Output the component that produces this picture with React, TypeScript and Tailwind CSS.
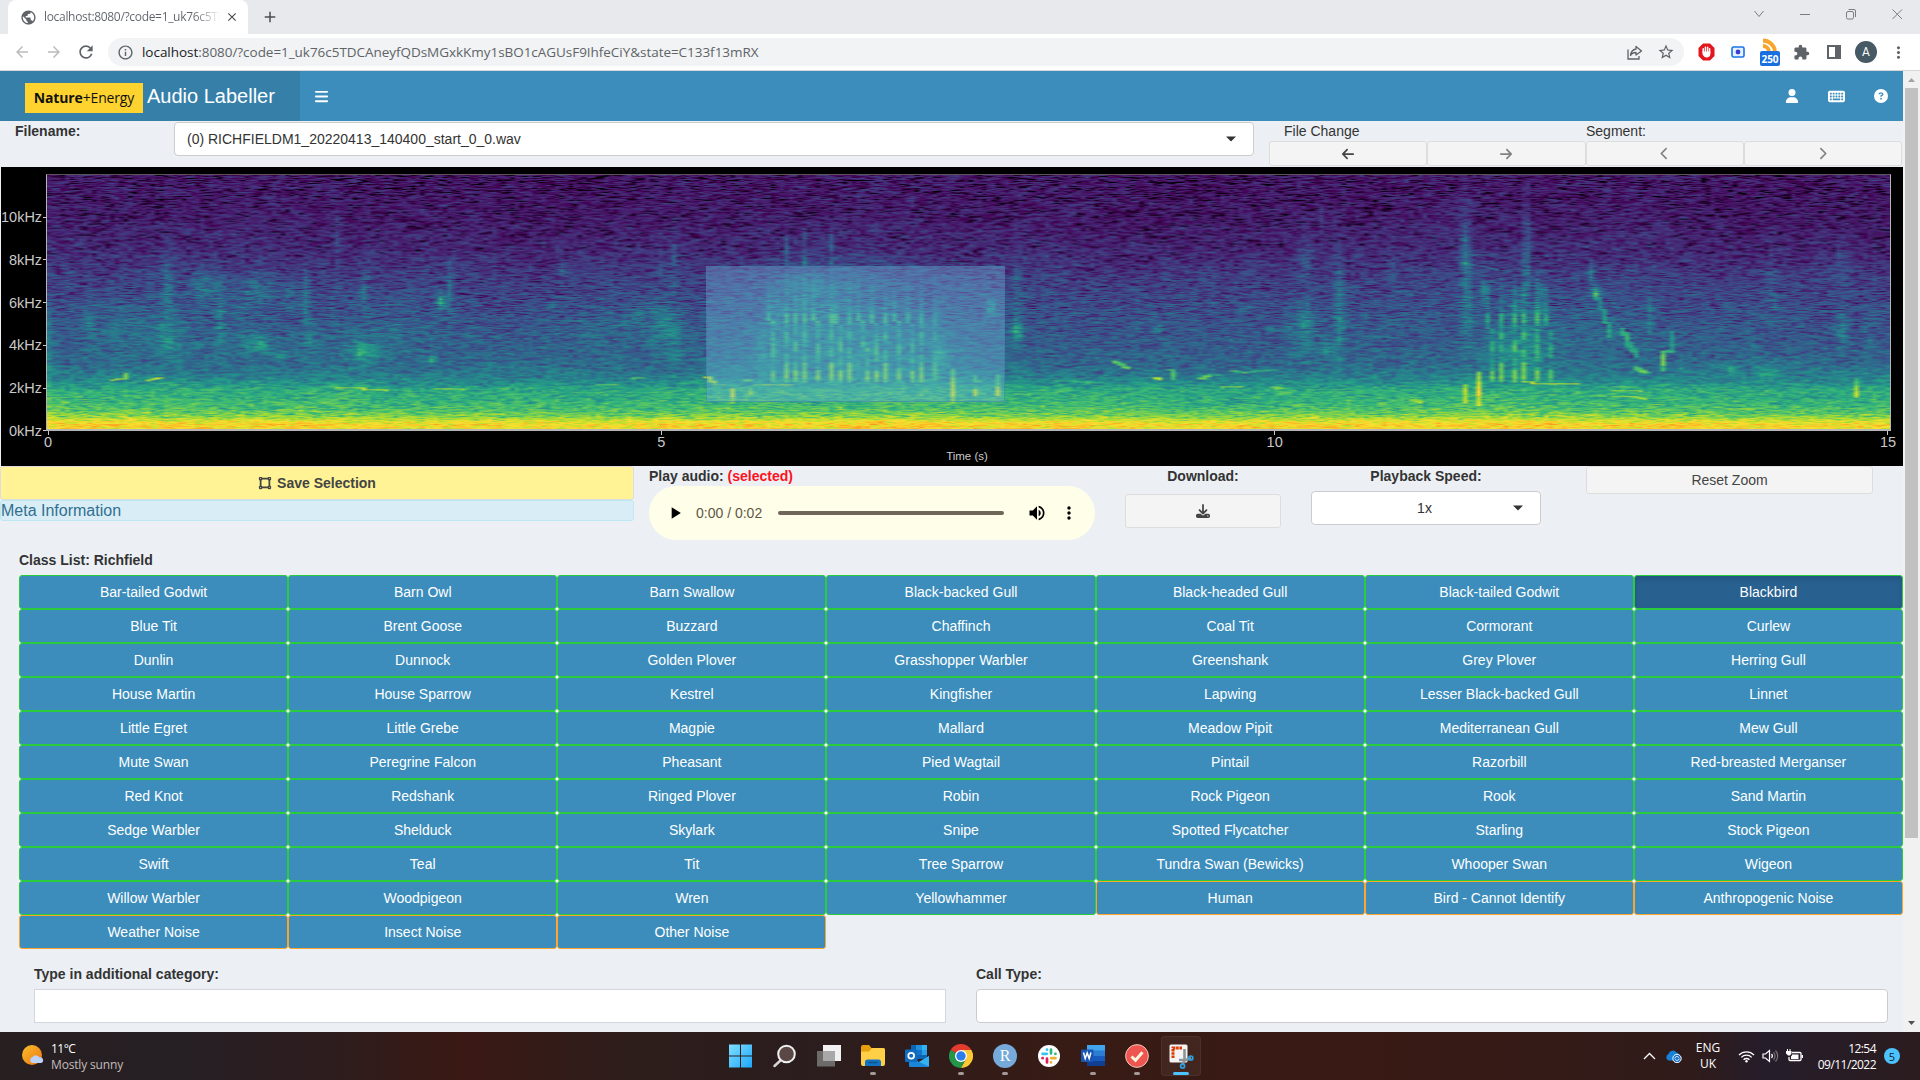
import React, { useEffect, useRef } from "react";
import {
  MdAdd, MdArrowBack, MdArrowForward, MdClose, MdExtension, MdInfoOutline, MdMoreVert,
  MdPlayArrow, MdPublic, MdRefresh, MdStarBorder, MdVolumeUp,
} from "react-icons/md";
import {
  FaArrowLeft, FaArrowRight, FaBars, FaChevronLeft, FaChevronRight, FaCircleQuestion,
  FaDownload, FaKeyboard, FaUser, FaVectorSquare,
} from "react-icons/fa6";

/* ---------- Browser chrome ---------- */

function TabStrip() {
  return (
    <div className="flex h-[34px] items-stretch bg-[#e8e9ed]">
      <div className="ml-2 flex w-[240px] items-center rounded-t-[8px] bg-white pl-[12px]">
        <MdPublic className="size-[17px] shrink-0 text-[#5f6368]" />
        <span className="ml-[7px] w-[176px] overflow-hidden whitespace-nowrap bg-gradient-to-r from-[#5f6368] from-85% to-transparent bg-clip-text font-['Open_Sans',sans-serif] text-[12px] tracking-[-0.32px] text-transparent">
          localhost:8080/?code=1_uk76c5TD
        </span>
        <MdClose className="ml-[5px] size-[14px] shrink-0 text-[#4a4d51]" />
      </div>
      <div className="ml-[13px] flex items-center">
        <MdAdd className="size-[18px] text-[#4a4d51]" />
      </div>
      <div className="ml-auto flex items-start gap-[32px] pr-[16px] pt-[7px] text-[#7a7c80]">
        <svg width="14" height="14" viewBox="0 0 14 14" fill="none" stroke="currentColor">
          <path d="M2.500 4 7 9.500 11.500 4" />
        </svg>
        <svg width="14" height="14" viewBox="0 0 14 14" fill="none" stroke="currentColor">
          <path d="M2 7.500h10" />
        </svg>
        <svg width="14" height="14" viewBox="0 0 14 14" fill="none" stroke="currentColor">
          <rect x="2.500" y="4.500" width="7" height="7.500" rx="1.500" />
          <path d="M4.500 2.500H10a1.500 1.500 0 0 1 1.500 1.500v6" />
        </svg>
        <svg width="14" height="14" viewBox="0 0 14 14" fill="none" stroke="currentColor">
          <path d="m2.500 2.500 9.500 9.500M12 2.500 2.500 12" />
        </svg>
      </div>
    </div>
  );
}

function AddressBar() {
  return (
    <div className="flex h-[37px] items-center border-b border-[#d5d7da] bg-white">
      <MdArrowBack className="ml-[13px] size-[18px] text-[#babcbe]" />
      <MdArrowForward className="ml-[14px] size-[18px] text-[#babcbe]" />
      <MdRefresh className="ml-[13px] size-[20px] text-[#5f6368]" />
      <div className="ml-[12px] flex h-[28px] w-[1576px] items-center rounded-full bg-[#f1f3f4] pl-[9px] pr-[9px]">
        <MdInfoOutline className="size-[17px] text-[#5f6368]" />
        <span className="ml-[8px] whitespace-nowrap font-['Open_Sans',sans-serif] text-[13.5px] tracking-[-0.040px] text-[#5f6368]">
          <span className="text-[#202124]">localhost</span>
          :8080/?code=1_uk76c5TDCAneyfQDsMGxkKmy1sBO1cAGUsF9IhfeCiY&amp;state=C133f13mRX
        </span>
        <svg width="17" height="17" viewBox="0 0 17 17" fill="none" stroke="#5f6368" strokeWidth="1.300" className="ml-auto">
          <path d="M2 5.500V15h11v-3" />
          <path d="M10 2.500 15.500 7 10 11V8.500C7 8.500 5.500 9.500 4.500 11.500 5 7.500 7 5.500 10 5z" strokeLinejoin="round" />
        </svg>
        <MdStarBorder className="ml-[14px] size-[18px] text-[#5f6368]" />
      </div>
      <svg width="17" height="18" viewBox="0 0 17 18" className="ml-[14px]">
        <path d="M5 0.500h7l4.500 4.500v8L12 17.500H5L.5 13V5z" fill="#e2161c" />
        <path d="M5.200 9.500V5.800M7.400 8.500V4.300M9.600 8.500V4.300M11.600 9.500V5.800" stroke="#fff" strokeWidth="1.500" strokeLinecap="round" />
        <path d="M4.500 8.500h7.900v2.500c0 2-1.500 3.400-3.600 3.400S5 13 4.500 11z" fill="#fff" />
      </svg>
      <svg width="14" height="12" viewBox="0 0 14 12" className="ml-[16px]">
        <rect x="1" y="1" width="12" height="10" rx="1.500" fill="#e8f1ff" stroke="#1a73e8" strokeWidth="1.600" />
        <circle cx="7" cy="6" r="2.400" fill="#3a3fd0" />
      </svg>
      <div className="ml-[15px] flex h-[28px] w-[20px] flex-col items-center">
        <svg width="15" height="13" viewBox="0 0 15 13">
          <path d="M0 2.500C6 2.500 11 7 12 13M0 8c3 0 5.500 2 6 5" fill="none" stroke="#f7a52c" strokeWidth="3.800" />
        </svg>
        <span className="flex h-[15px] w-[20px] items-center justify-center rounded-[2px] bg-[#1a6fe0] font-['Open_Sans',sans-serif] text-[10px] font-bold leading-none text-white">
          250
        </span>
      </div>
      <MdExtension className="ml-[13px] size-[17px] text-[#5f6368]" />
      <svg width="14" height="14" viewBox="0 0 14 14" className="ml-[17px]">
        <rect x="1" y="1" width="12" height="12" fill="none" stroke="#5f6368" strokeWidth="2" />
        <path d="M8 1h5v12H8z" fill="#5f6368" />
      </svg>
      <div className="ml-[14px] flex size-[22px] items-center justify-center rounded-full bg-[#455a64] font-['Roboto',sans-serif] text-[12px] text-white">
        A
      </div>
      <MdMoreVert className="ml-[12px] size-[19px] text-[#5f6368]" />
    </div>
  );
}

function Scrollbar() {
  return (
    <div className="flex w-[17px] shrink-0 flex-col items-center justify-between bg-[#f1f1f1]">
      <svg width="17" height="17" viewBox="0 0 17 17"><path d="M5 11h7L8.500 7z" fill="#a3a3a3" /></svg>
      <div className="mb-auto h-[750px] w-[13px] bg-[#c1c1c1]" />
      <svg width="17" height="17" viewBox="0 0 17 17"><path d="M5 6h7L8.500 10z" fill="#505050" /></svg>
    </div>
  );
}

/* ---------- Application ---------- */

function Header() {
  return (
    <div className="flex h-[50px] items-center bg-[#3c8dbc] text-white">
      <div className="flex h-full w-[300px] items-start bg-[#367fa9] pl-[25px]">
        <div className="mt-[12px] flex h-[30px] w-[118px] items-center justify-center whitespace-nowrap bg-[#ffd32f] pb-px font-['Open_Sans',sans-serif] text-[14px] tracking-[-0.15px] text-[#111]">
          <b>Nature</b>+Energy
        </div>
        <span className="ml-[4px] mt-[10px] whitespace-nowrap text-[20px] leading-[30px]">Audio Labeller</span>
      </div>
      <FaBars className="ml-[14px] size-[15px]" />
      <div className="ml-auto flex items-center pr-[15px]">
        <FaUser className="size-[14px]" />
        <FaKeyboard className="ml-[29px] size-[17px]" />
        <FaCircleQuestion className="ml-[29px] size-[14px]" />
      </div>
    </div>
  );
}

const Caret = () => (
  <svg width="10" height="6" viewBox="0 0 10 6"><path d="M0 0.500h10L5 5.500z" fill="#333" /></svg>
);

function FileRow() {
  const nav = "flex h-[25px] flex-1 items-center justify-center rounded-[3px] border border-[#ddd] bg-[#f4f4f4]";
  return (
    <div className="flex h-[46px] items-start">
      <span className="w-[174px] pl-[15px] font-bold leading-[20px]">Filename:</span>
      <div className="mt-[1px] flex h-[34px] w-[1080px] items-center justify-between rounded-[4px] border border-[#ccc] bg-white pl-[12px] pr-[17px]">
        <span>(0) RICHFIELDM1_20220413_140400_start_0_0.wav</span>
        <Caret />
      </div>
      <div className="ml-[15px] flex w-[633px] flex-col">
        <div className="flex h-[20px] leading-[20px]">
          <span className="w-1/2 pl-[15px]">File Change</span>
          <span className="w-1/2 pl-[0.5px]">Segment:</span>
        </div>
        <div className="flex text-[#444]">
          <div className={nav}><FaArrowLeft className="size-[14px]" /></div>
          <div className={nav}><FaArrowRight className="size-[14px] opacity-65" /></div>
          <div className={nav}><FaChevronLeft className="size-[13px] opacity-65" /></div>
          <div className={nav}><FaChevronRight className="size-[13px] opacity-65" /></div>
        </div>
      </div>
    </div>
  );
}

/* ---------- Spectrogram ---------- */

const PALETTE: number[][] = [
  [0, 0, 4], [68, 1, 84], [71, 39, 117], [62, 72, 136], [49, 102, 141], [38, 130, 141],
  [36, 157, 136], [56, 185, 118], [110, 205, 88], [180, 222, 44], [249, 226, 48], [253, 160, 30], [240, 95, 30],
];

function shade(v: number): number[] {
  const p = Math.max(0, Math.min(PALETTE.length - 1.001, v * 10));
  const i = Math.floor(p);
  const f = p - i;
  return [0, 1, 2].map((k) => PALETTE[i][k] * (1 - f) + PALETTE[i + 1][k] * f);
}

/* Mean intensity by row, from the top of the plot (12 kHz) to the bottom (0 Hz). */
const PROFILE: [number, number][] = [
  [0, 0.14], [40, 0.155], [75, 0.2], [100, 0.26], [130, 0.31], [165, 0.36], [190, 0.4], [203, 0.48],
  [212, 0.58], [216, 0.64], [228, 0.67], [237, 0.74], [243, 0.83], [247, 0.94], [251, 1.01], [255, 1.0],
];

function profile(y: number): number {
  for (let i = 1; i < PROFILE.length; i++) {
    const [y1, v1] = PROFILE[i];
    if (y <= y1) {
      const [y0, v0] = PROFILE[i - 1];
      return v0 + ((v1 - v0) * (y - y0)) / (y1 - y0);
    }
  }
  return PROFILE[PROFILE.length - 1][1];
}

/* Soft patches: centre x, centre y, half width, half height, gain (plot pixels). */
const PATCHES: number[][] = [
  [168, 115, 6, 42, 0.14], [150, 105, 4, 25, 0.07], [205, 111, 16, 16, 0.13], [257, 115, 18, 16, 0.14],
  [290, 120, 5, 15, 0.12], [306, 122, 4, 26, 0.16], [338, 65, 3, 22, 0.12], [364, 115, 4, 18, 0.14],
  [441, 126, 4, 8, 0.3], [450, 115, 4, 32, 0.12], [220, 140, 4, 35, 0.12], [89, 150, 6, 18, 0.12],
  [130, 150, 30, 22, 0.08], [168, 165, 14, 14, 0.12], [250, 168, 14, 10, 0.12], [262, 172, 5, 7, 0.2],
  [280, 182, 8, 4, 0.14], [310, 165, 6, 12, 0.1], [367, 178, 14, 10, 0.17], [360, 178, 4, 10, 0.12],
  [432, 186, 4, 4, 0.28], [395, 160, 6, 12, 0.08], [674, 85, 4, 26, 0.14], [661, 85, 4, 15, 0.08],
  [665, 148, 18, 26, 0.13], [674, 165, 8, 18, 0.08], [635, 145, 12, 12, 0.08], [562, 96, 4, 12, 0.1],
  [350, 165, 230, 34, 0.03], [600, 160, 40, 30, 0.04],
  [1018, 157, 5, 9, 0.25], [1018, 120, 4, 60, 0.08], [1306, 82, 7, 22, 0.13], [1307, 150, 9, 24, 0.17],
  [1290, 150, 8, 15, 0.08], [1340, 125, 5, 60, 0.14], [1159, 155, 4, 4, 0.15], [1248, 132, 5, 4, 0.14],
  [1271, 155, 4, 4, 0.15], [1328, 176, 8, 10, 0.15], [1322, 45, 3, 14, 0.1], [1393, 100, 4, 30, 0.07],
  [1466, 70, 5, 40, 0.14], [1468, 125, 6, 60, 0.13], [1484, 116, 5, 14, 0.15], [1527, 80, 4, 55, 0.19],
  [1540, 125, 6, 24, 0.14], [1515, 125, 8, 20, 0.08], [1597, 118, 4, 6, 0.33], [1593, 99, 3, 12, 0.2],
  [1614, 155, 40, 20, 0.05], [1650, 140, 3, 24, 0.12], [1843, 155, 5, 18, 0.15], [1843, 95, 6, 25, 0.1],
  [1870, 155, 6, 30, 0.07], [1773, 105, 5, 40, 0.08], [1733, 196, 4, 4, 0.2], [46, 190, 6, 50, 0.16],
  [54, 230, 20, 12, 0.1], [810, 115, 36, 24, 0.12], [865, 105, 50, 30, 0.05], [992, 133, 5, 9, 0.2],
  [776, 150, 6, 40, 0.08], [762, 180, 5, 25, 0.1], [850, 172, 88, 36, 0.12], [940, 180, 8, 16, 0.14],
  [1521, 172, 34, 30, 0.13], [1790, 195, 100, 14, 0.04], [1768, 200, 14, 10, 0.08],
];

/* Call traces: x0, y0, x1, y1, thickness, gain (plot pixels). */
const TRACES: number[][] = [
  [110, 207, 124, 205, 1, 0.34], [124, 205, 126, 199, 1, 0.3], [147, 207, 162, 204, 1, 0.4],
  [337, 214, 365, 215, 1, 0.3], [365, 216, 386, 217, 1, 0.3], [435, 215, 465, 216, 1, 0.28],
  [597, 211, 618, 211, 1, 0.34], [635, 205, 645, 204, 1, 0.25], [708, 204, 714, 209, 1.5, 0.4],
  [714, 211, 724, 211, 1, 0.3], [745, 207, 750, 207, 2, 0.3], [757, 211, 793, 211, 1, 0.34],
  [1116, 188, 1129, 195, 2, 0.34], [1155, 205, 1162, 206, 2, 0.4], [1168, 196, 1175, 197, 1, 0.28],
  [1175, 197, 1175, 206, 2, 0.28], [1230, 197, 1244, 199, 1, 0.28], [1244, 199, 1279, 196, 1, 0.22],
  [1202, 205, 1208, 203, 2, 0.3], [1208, 202, 1220, 201, 1, 0.28], [1058, 207, 1104, 210, 1, 0.22],
  [1224, 213, 1242, 213, 1, 0.34], [1271, 214, 1282, 215, 2, 0.25], [1414, 227, 1422, 229, 2, 0.24],
  [1524, 208, 1533, 209, 1, 0.42], [1533, 210, 1578, 210, 1, 0.44],
  [1597, 120, 1602, 133, 3, 0.17], [1602, 133, 1612, 162, 3, 0.22], [1624, 156, 1630, 170, 4, 0.26],
  [1628, 168, 1638, 181, 6, 0.24], [1635, 194, 1645, 198, 3, 0.32], [1645, 199, 1652, 199, 2, 0.18],
  [1665, 178, 1665, 190, 3, 0.4], [1665, 190, 1665, 197, 2, 0.24], [1667, 177, 1674, 178, 2, 0.3],
  [1673, 158, 1674, 176, 2, 0.2], [1677, 171, 1678, 171, 2, 0.16], [1682, 195, 1683, 195, 2, 0.16],
  [1613, 213, 1637, 213, 1, 0.25], [1613, 217, 1643, 218, 1, 0.25], [1616, 223, 1635, 223, 1, 0.25],
  [1635, 224, 1644, 226, 1, 0.25], [1463, 88, 1497, 95, 1, 0.17], [1473, 81, 1497, 80, 1, 0.17],
  [1859, 206, 1859, 214, 3, 0.22], [1859, 214, 1859, 222, 3, 0.32], [1464, 212, 1464, 228, 3, 0.28],
  [1481, 199, 1481, 208, 3, 0.34], [1481, 208, 1481, 221, 3, 0.42], [1481, 221, 1481, 231, 3, 0.28],
  [955, 196, 955, 206, 3, 0.24], [955, 206, 955, 222, 3, 0.36], [955, 222, 955, 228, 3, 0.24],
  [976, 203, 978, 208, 2, 0.2], [976, 217, 977, 222, 2, 0.32], [998, 202, 998, 212, 3, 0.22],
  [998, 214, 998, 221, 3, 0.34], [731, 216, 731, 222, 3, 0.34], [731, 222, 731, 228, 3, 0.2],
  [749, 215, 750, 221, 2, 0.18], [1800, 207, 1808, 207, 1, 0.1],
];

/* Rattling calls: x of each pulse's upper end, x of its lower end, strength. */
const PULSES: [number, number, number][] = [
  [771, 775, 0.9], [785, 785, 1], [794, 798, 1], [807, 807, 0.95], [816, 820, 1], [830, 830, 1.05],
  [838, 842, 1], [852, 852, 0.9], [861, 866, 0.95], [874, 879, 1], [888, 888, 0.95], [897, 901, 0.95],
  [910, 914, 0.95], [924, 924, 0.95], [936, 936, 0.6],
  [1489, 1495, 0.95], [1503, 1503, 1], [1514, 1516, 1], [1526, 1526, 0.95], [1537, 1539, 1], [1548, 1552, 0.85],
];

function drawSpectrogram(canvas: HTMLCanvasElement) {
  const w = canvas.width;
  const h = canvas.height;
  const ctx = canvas.getContext("2d");
  if (!ctx) return;
  let seed = 20220413;
  const random = () => {
    seed = (seed + 0x6d2b79f5) | 0;
    let t = Math.imul(seed ^ (seed >>> 15), 1 | seed);
    t = (t + Math.imul(t ^ (t >>> 7), 61 | t)) ^ t;
    return ((t ^ (t >>> 14)) >>> 0) / 4294967296;
  };
  const patches = new Float32Array(w * h);
  const traces = new Float32Array(w * h);
  const scale = 1844 / w;
  const add = (px: number, y: number, gain: number) => {
    const x = Math.round((px - 47) / scale - 0.5);
    const yy = Math.round(y);
    if (x >= 0 && x < w && yy >= 0 && yy < h) traces[yy * w + x] = Math.max(traces[yy * w + x], gain);
  };
  for (const [cx, cy, rx, ry, gain] of PATCHES) {
    const c = (cx - 47) / scale - 0.5;
    const r = Math.max(0.7, rx / scale);
    for (let y = Math.max(0, Math.floor(cy - ry * 2)); y < Math.min(h, cy + ry * 2); y++)
      for (let x = Math.max(0, Math.floor(c - r * 2)); x < Math.min(w, c + r * 2 + 1); x++)
        patches[y * w + x] += gain * Math.exp(-(((x - c) / r) ** 2) - ((y - cy) / ry) ** 2);
  }
  for (const [x0, y0, x1, y1, t, gain] of TRACES) {
    for (let i = 0; i <= 60; i++) {
      const x = x0 + ((x1 - x0) * i) / 60;
      const y = y0 + ((y1 - y0) * i) / 60;
      for (let d = 0; d < t; d++) add(x, y + d - t / 2, gain);
    }
  }
  for (const [upper, lower, strength] of PULSES) {
    const shift = random() * 5;
    const bend = lower - upper;
    for (let y = 92; y < 209; y++) {
      let g = 0.1 + 0.06 * Math.sin(y / 3 + shift);
      if (y < 139) g = 0.11 * ((y - 92) / 47);
      else if (y < 152) g = Math.abs(y - 144) < 5 ? 0.27 : 0.18;
      else if (bend ? Math.abs(y - 172 - shift / 2) < 5 : Math.abs(y - 161) < 4) g = 0.22;
      else if (y > 188 + (bend ? 8 : 0)) g = 0.24 + (y < 205 ? 0.05 : 0);
      const x = upper + bend * Math.max(0, Math.min(1, (y - 146) / 30));
      add(x, y, g * strength);
    }
  }
  for (const x of [785, 807, 830]) for (let y = 53; y < 92; y++) add(x, y, 0.1 + 0.04 * Math.sin(y / 5 + x));

  const image = ctx.createImageData(w, h);
  for (let y = 0; y < h; y++) {
    const base = profile(y);
    const sigma = y > 244 ? 0.05 : 0.073;
    let prev = 0;
    for (let x = 0; x < w; x++) {
      const e = Math.log(-Math.log(Math.max(1e-6, 1 - random())) + 0.04) + 0.48;
      const noise = e * 0.85 + prev * 0.25;
      prev = e;
      const drift = 0.01 * Math.sin(x / 23) + 0.008 * Math.sin(x / 7 + y / 40);
      const t = traces[y * w + x];
      const v = base + drift + patches[y * w + x] * (y > 205 ? 0.5 : 1) + t * (y > 205 ? 0.8 : 1) + noise * (t > 0.15 ? 0.035 : sigma);
      const [r, g, b] = shade(v);
      image.data.set([r, g, b, 255], (y * w + x) * 4);
    }
  }
  ctx.putImageData(image, 0, 0);
}

function Spectrogram() {
  const ref = useRef<HTMLCanvasElement>(null);
  useEffect(() => {
    if (ref.current) drawSpectrogram(ref.current);
  }, []);
  return (
    <div className="relative ml-px flex h-[299px] flex-col bg-black text-[#c9c9c9]">
      <div className="flex pt-[7px]">
        <div className="flex w-[45px] shrink-0 flex-col justify-between pt-[35px] text-right text-[14.5px] leading-[16px]">
          {["10kHz", "8kHz", "6kHz", "4kHz", "2kHz", "0kHz"].map((t) => (
            <div key={t} className="mb-[26.6px] flex items-center justify-end gap-px last:mb-[-8px]">
              <span>{t}</span>
              <span className="h-px w-[3px] bg-[#c9c9c9]" />
            </div>
          ))}
        </div>
        <div className="h-[257px] border-b-2 border-l border-r border-t border-[#b5b5b5] border-t-[#5b5359]">
          <canvas ref={ref} width={410} height={256} className="h-[254px] w-[1843px]" />
        </div>
      </div>
      <div className="flex w-[1890px] justify-between pl-[44px] text-[14.5px] leading-[14px]">
        {["0", "5", "10", "15"].map((t) => (
          <div key={t} className="flex w-[6px] flex-col items-center">
            <span className="h-[4px] w-px bg-[#c9c9c9]" />
            <span>{t}</span>
          </div>
        ))}
      </div>
      <div className="ml-[927px] mt-px w-[78px] text-center text-[11.5px] leading-[13px]">Time (s)</div>
      <div className="absolute left-[705px] top-[99px] h-[136px] w-[299px] border border-[#3c78a2]/50 bg-[#79bee2]/35" />
    </div>
  );
}

/* ---------- Controls ---------- */

function Controls() {
  return (
    <div className="flex h-[84px] items-start">
      <div className="flex w-[634px] flex-col">
        <div className="flex h-[34px] items-center justify-center rounded-[3px] border border-[#ddd] bg-[#fff395] font-bold text-[#444]">
          <FaVectorSquare className="mr-[5px] size-[14px]" />
          Save Selection
        </div>
        <div className="flex h-[21px] items-center rounded-[3px] border border-[#bce8f1] bg-[#d9edf7] text-[16px] text-[#31708f]">
          Meta Information
        </div>
      </div>
      <div className="ml-[15px] flex w-[446px] flex-col">
        <div className="h-[20px] font-bold leading-[20px]">
          Play audio: <span className="text-[#ff1020]">(selected)</span>
        </div>
        <div className="flex h-[54px] items-center rounded-full bg-[#fffee9] text-black">
          <MdPlayArrow className="ml-[16px] size-[20px]" />
          <span className="ml-[11px] w-[82px] text-[14px] text-[#5f5748]">0:00 / 0:02</span>
          <span className="h-[4px] w-[226px] rounded-full bg-[#6e675a]" />
          <MdVolumeUp className="ml-[23px] size-[20px]" />
          <MdMoreVert className="ml-[12px] size-[20px]" />
        </div>
      </div>
      <div className="ml-[30px] flex w-[156px] flex-col items-center">
        <span className="h-[20px] font-bold leading-[20px]">Download:</span>
        <div className="mt-[8px] flex h-[34px] w-full items-center justify-center rounded-[3px] border border-[#ddd] bg-[#f4f4f4] text-[#444]">
          <FaDownload className="size-[14px]" />
        </div>
      </div>
      <div className="ml-[30px] flex w-[230px] flex-col items-center">
        <span className="h-[20px] font-bold leading-[20px]">Playback Speed:</span>
        <div className="mt-[5px] flex h-[34px] w-full items-center rounded-[4px] border border-[#ccc] bg-white pl-[20px] pr-[17px]">
          <span className="flex-1 pl-[4px] text-center">1x</span>
          <Caret />
        </div>
      </div>
      <div className="ml-[45px] flex h-[28px] w-[287px] items-center justify-center rounded-[3px] border border-[#ddd] bg-[#f4f4f4] text-[#444]">
        Reset Zoom
      </div>
    </div>
  );
}

const BIRDS = [
  "Bar-tailed Godwit", "Barn Owl", "Barn Swallow", "Black-backed Gull", "Black-headed Gull", "Black-tailed Godwit", "Blackbird",
  "Blue Tit", "Brent Goose", "Buzzard", "Chaffinch", "Coal Tit", "Cormorant", "Curlew",
  "Dunlin", "Dunnock", "Golden Plover", "Grasshopper Warbler", "Greenshank", "Grey Plover", "Herring Gull",
  "House Martin", "House Sparrow", "Kestrel", "Kingfisher", "Lapwing", "Lesser Black-backed Gull", "Linnet",
  "Little Egret", "Little Grebe", "Magpie", "Mallard", "Meadow Pipit", "Mediterranean Gull", "Mew Gull",
  "Mute Swan", "Peregrine Falcon", "Pheasant", "Pied Wagtail", "Pintail", "Razorbill", "Red-breasted Merganser",
  "Red Knot", "Redshank", "Ringed Plover", "Robin", "Rock Pigeon", "Rook", "Sand Martin",
  "Sedge Warbler", "Shelduck", "Skylark", "Snipe", "Spotted Flycatcher", "Starling", "Stock Pigeon",
  "Swift", "Teal", "Tit", "Tree Sparrow", "Tundra Swan (Bewicks)", "Whooper Swan", "Wigeon",
  "Willow Warbler", "Woodpigeon", "Wren", "Yellowhammer",
];
const OTHERS = [
  "Human", "Bird - Cannot Identify", "Anthropogenic Noise", "Weather Noise", "Insect Noise", "Other Noise",
];

function ClassList() {
  return (
    <div className="ml-[19px] flex flex-col">
      <div className="h-[25px] font-bold leading-[20px]">Class List: Richfield</div>
      <div className="grid grid-cols-7 text-white">
        {BIRDS.map((name) => (
          <div key={name} className="bg-[#f4faf4]">
            <div
              className={
                name === "Blackbird"
                  ? "flex h-[34px] items-center justify-center rounded-[3px] border border-[#28cc3c] bg-[#286090] shadow-[inset_0_3px_5px_rgba(0,0,0,0.125)]"
                  : "flex h-[34px] items-center justify-center rounded-[3px] border border-[#28cc3c] bg-[#3c8dbc]"
              }
            >
              {name}
            </div>
          </div>
        ))}
        {OTHERS.map((name) => (
          <div key={name} className="bg-[#f4faf4]">
            <div className="flex h-[34px] items-center justify-center rounded-[3px] border border-[#ffa52c] bg-[#3c8dbc]">
              {name}
            </div>
          </div>
        ))}
      </div>
    </div>
  );
}

function ExtraFields() {
  return (
    <div className="mt-[15px] flex gap-[30px] pl-[34px] font-bold">
      <div className="w-[912px]">
        <div className="h-[25px] leading-[20px]">Type in additional category:</div>
        <div className="h-[34px] border border-[#d2d6de] bg-white" />
      </div>
      <div className="w-[912px]">
        <div className="h-[25px] leading-[20px]">Call Type:</div>
        <div className="h-[34px] rounded-[4px] border border-[#ccc] bg-white" />
      </div>
    </div>
  );
}

/* ---------- Taskbar ---------- */

function Slot({ children, dot, active }: { children: React.ReactNode; dot?: boolean; active?: boolean }) {
  return (
    <div
      className={
        active
          ? "relative flex h-[40px] w-[40px] items-center justify-center rounded-[4px] border border-white/5 bg-white/5"
          : "relative flex h-[40px] w-[40px] items-center justify-center"
      }
    >
      {children}
      {dot && <span className="absolute bottom-[1px] h-[3px] w-[6px] rounded-full bg-[#a39a98]" />}
      {active && <span className="absolute bottom-0 h-[3px] w-[16px] rounded-full bg-[#4cc2ff]" />}
    </div>
  );
}

function TaskIcons() {
  return (
    <div className="flex items-center gap-[4px]">
      <Slot>
        <svg width="24" height="24" viewBox="0 0 24 24">
          <defs>
            <linearGradient id="win" x1="0" y1="0" x2="1" y2="1" gradientUnits="objectBoundingBox">
              <stop offset="0" stopColor="#7fe0ff" /><stop offset="1" stopColor="#1ea7fa" />
            </linearGradient>
          </defs>
          <path d="M0 .5h11v11H0zM12 .5h11v11H12zM0 12.500h11v11H0zM12 12.500h11v11H12z" fill="url(#win)" />
        </svg>
      </Slot>
      <Slot>
        <svg width="24" height="24" viewBox="0 0 24 24">
          <path d="m8 16-6.500 6" stroke="#d8d6d6" strokeWidth="2.400" strokeLinecap="round" />
          <circle cx="13.500" cy="10" r="8.300" fill="#5b4846" stroke="#f1f1f1" strokeWidth="2" />
        </svg>
      </Slot>
      <Slot>
        <svg width="24" height="24" viewBox="0 0 24 24">
          <path d="M6 1h18v16H6z" fill="#f1f1f1" />
          <path d="M0 7h18v15.500H0z" fill="#6d6a6a" />
          <path d="M6 7h12v10H6z" fill="#a9a7a7" />
        </svg>
      </Slot>
      <Slot dot>
        <svg width="24" height="24" viewBox="0 0 24 24">
          <path d="M0 3q0-2 2-2h6l2.500 3H22q2 0 2 2v4H0z" fill="#e5a00d" />
          <path d="M0 7.500h8L11 4h11q2 0 2 2v14q0 2-2 2H2q-2 0-2-2z" fill="#ffcf48" />
          <path d="M4 22v-4q0-2.500 2.500-2.500h11Q20 15.500 20 18v4z" fill="#1273c4" />
          <path d="M8 18.500h8" stroke="#0a5492" strokeWidth="1.500" strokeLinecap="round" />
        </svg>
      </Slot>
      <Slot>
        <svg width="24" height="24" viewBox="0 0 24 24">
          <path d="M6 1h16v14H6z" fill="#0c64b5" />
          <path d="M11 1h6v5h-6z" fill="#1f8fe0" /><path d="M17 1h5v5h-5z" fill="#33b2f2" />
          <path d="M11 6h6v5h-6z" fill="#1474cc" /><path d="M17 6h5v5h-5z" fill="#27a0ea" />
          <path d="M4 12 14 18l10-6v10q0 1-1 1H5q-1 0-1-1z" fill="#1a86d9" />
          <path d="m14 18 10-6v10.500z" fill="#35b0f0" />
          <rect y="5.500" width="12.500" height="12.500" rx="1" fill="#0f6cc0" />
          <circle cx="6.200" cy="11.700" r="2.900" fill="none" stroke="#fff" strokeWidth="1.700" />
        </svg>
      </Slot>
      <Slot dot>
        <svg width="24" height="24" viewBox="0 0 24 24">
          <path d="M12 12 1.600 6A12 12 0 0 1 22.400 6z" fill="#e33b2e" />
          <path d="M12 12 1.600 6A12 12 0 0 0 12 24l4.800-9.200z" fill="#23964a" />
          <path d="M12 6h10.400A12 12 0 0 1 12 24l5-9z" fill="#fcc934" />
          <circle cx="12" cy="12" r="6" fill="#fff" /><circle cx="12" cy="12" r="4.700" fill="#2b7de9" />
        </svg>
      </Slot>
      <Slot dot>
        <div className="flex size-[24px] items-center justify-center rounded-full bg-[#75aadb] font-['Liberation_Serif',serif] text-[16px] leading-none text-white">
          R
        </div>
      </Slot>
      <Slot>
        <svg width="24" height="24" viewBox="0 0 24 24" strokeWidth="2.700" strokeLinecap="round">
          <circle cx="12" cy="12" r="11" fill="#fff" />
          <path d="M10 5.500v.2M5.500 9.800h4.300" stroke="#36c5f0" />
          <path d="M14 5.500v4M18.500 9.800h-.2" stroke="#2eb67d" />
          <path d="M14 18.500v-.2M18.500 14.200h-4.300" stroke="#ecb22e" />
          <path d="M10 18.500v-4M5.500 14.200h.2" stroke="#e01e5a" />
        </svg>
      </Slot>
      <Slot dot>
        <svg width="24" height="24" viewBox="0 0 24 24">
          <path d="M6 1h18v6H6z" fill="#41a5ee" /><path d="M6 6.500h18V12H6z" fill="#2b7cd3" />
          <path d="M6 12h18v5.500H6z" fill="#185abd" /><path d="M6 17h18v5H6z" fill="#103f91" />
          <rect y="5.500" width="12.500" height="12.500" rx="1" fill="#1956b4" />
          <path d="m2.500 8.500 1.700 6 2-5.500 2 5.500 1.700-6" fill="none" stroke="#fff" strokeWidth="1.500" />
        </svg>
      </Slot>
      <Slot dot>
        <svg width="24" height="24" viewBox="0 0 24 24">
          <circle cx="12" cy="12" r="11.400" fill="#ee5450" stroke="#f3d9c8" strokeWidth=".9" />
          <path d="m6.500 12.500 4 3.800 7-8" fill="none" stroke="#fdf3dc" strokeWidth="3" />
        </svg>
      </Slot>
      <Slot active>
        <svg width="25" height="25" viewBox="0 0 25 25">
          <rect x="0.500" y="0.500" width="18" height="18" rx="1.500" fill="#f4f4f4" />
          <path d="M13 4H4v10" fill="none" stroke="#d83b01" strokeWidth="3" strokeDasharray="2.600 .7" />
          <path d="M15.500 5v12l-2.500 4M10 16h7l5-2" fill="none" stroke="#8c9498" strokeWidth="2.600" />
          <circle cx="21.800" cy="14" r="2" fill="none" stroke="#2aa4e8" strokeWidth="1.700" />
          <circle cx="13.600" cy="22" r="2" fill="none" stroke="#2aa4e8" strokeWidth="1.700" />
        </svg>
      </Slot>
    </div>
  );
}

function Taskbar() {
  return (
    <div className="flex h-[48px] items-center bg-[linear-gradient(90deg,#271f20_0%,#261f24_10%,#2e1c1c_18%,#3a1914_24%,#2d1d1b_33%,#2b1d1e_42%,#371b15_55%,#3a1a14_70%,#2f1b19_88%,#251d2b_92%,#2b1c1e_100%)] font-['Open_Sans',sans-serif] text-[12px] text-white">
      <div className="flex w-[721px] items-center pl-[21px]">
        <svg width="24" height="24" viewBox="0 0 24 24">
          <defs>
            <linearGradient id="sun" x1="0" y1="0" x2="1" y2="1">
              <stop offset="0" stopColor="#f9c02d" /><stop offset="1" stopColor="#ee7410" />
            </linearGradient>
          </defs>
          <circle cx="11" cy="11" r="10" fill="url(#sun)" />
          <path d="M11 19a3.200 3.200 0 0 1 .5-6 4 4 0 0 1 7 .5 2.800 2.800 0 0 1 1.500 5.500z" fill="#bcd3f7" />
        </svg>
        <div className="ml-[6px] flex flex-col pt-[2px] leading-[16px]">
          <span className="tracking-[-0.5px]">11°C</span>
          <span className="tracking-[-0.16px] text-[#c3bcbb]">Mostly sunny</span>
        </div>
      </div>
      <TaskIcons />
      <div className="ml-auto flex items-center pr-[20px]">
        <svg width="13" height="8" viewBox="0 0 13 8" fill="none" stroke="#fff" strokeWidth="1.300"><path d="m1 7 5.500-5.500L12 7" /></svg>
        <svg width="17" height="14" viewBox="0 0 17 14" className="ml-[9px]">
          <path d="M3.500 11.500a3.500 3.500 0 0 1 0-6.500 4.500 4.500 0 0 1 8-1.500 4 4 0 0 1 3 4v4z" fill="#1382d8" />
          <circle cx="12" cy="9.500" r="4.200" fill="#1a6fc8" stroke="#fff" strokeWidth="1" />
          <path d="M9.800 9.500a2.200 2.200 0 0 1 4-1M14.200 9.500a2.200 2.200 0 0 1-4 1" fill="none" stroke="#fff" />
        </svg>
        <div className="ml-[13px] flex w-[26px] flex-col items-center leading-[16px]">
          <span>ENG</span><span>UK</span>
        </div>
        <svg width="17" height="13" viewBox="0 0 17 13" fill="none" stroke="#fff" strokeWidth="1.300" className="ml-[17px]">
          <path d="M1 5a10.500 10.500 0 0 1 15 0M3.300 7.400a7.300 7.300 0 0 1 10.400 0M5.600 9.700a4.100 4.100 0 0 1 5.800 0" />
          <circle cx="8.500" cy="11.300" r="1.200" fill="#fff" stroke="none" />
        </svg>
        <svg width="17" height="14" viewBox="0 0 17 14" fill="none" stroke="#fff" strokeWidth="1.200" className="ml-[7px]">
          <path d="M1 5v4h2.500L7.500 12.500v-11L3.500 5z" /><path d="M9.500 5a3 3 0 0 1 0 4" />
          <path d="M11.500 3.200a5.500 5.500 0 0 1 0 7.600M13.500 1.500a8 8 0 0 1 0 11" stroke="#7a7076" />
        </svg>
        <svg width="17" height="14" viewBox="0 0 17 14" className="ml-[7px]">
          <path d="M6 3.500h8q1 0 1 1v6q0 1-1 1H4q-1 0-1-1V8" fill="none" stroke="#fff" strokeWidth="1.300" />
          <path d="M6 5.500h6.500v4.500H5V7.500q1-.5 1-2zM15.500 6H17v3h-1.500zM0 2h5.500v2.500L4 6.500H2L0 4.500zM1 0h1v2H1zM3.500 0h1v2h-1z" fill="#fff" />
        </svg>
        <div className="ml-[13px] flex w-[60px] flex-col items-end whitespace-nowrap pt-px leading-[16px] tracking-[-0.55px]">
          <span>12:54</span><span>09/11/2022</span>
        </div>
        <span className="ml-[8px] flex size-[16px] items-center justify-center rounded-full bg-[#4cc2ff] text-[11px] leading-none text-[#102030]">5</span>
      </div>
    </div>
  );
}

export default function App() {
  return (
    <div className="flex h-[1080px] w-[1920px] flex-col overflow-hidden bg-[#ecf0f5] font-['Liberation_Sans',Arial,sans-serif] text-[14px] text-[#333]">
      <TabStrip />
      <AddressBar />
      <div className="flex h-[961px]">
        <div className="flex w-[1903px] flex-col overflow-hidden">
          <Header />
          <FileRow />
          <Spectrogram />
          <Controls />
          <ClassList />
          <ExtraFields />
        </div>
        <Scrollbar />
      </div>
      <Taskbar />
    </div>
  );
}
